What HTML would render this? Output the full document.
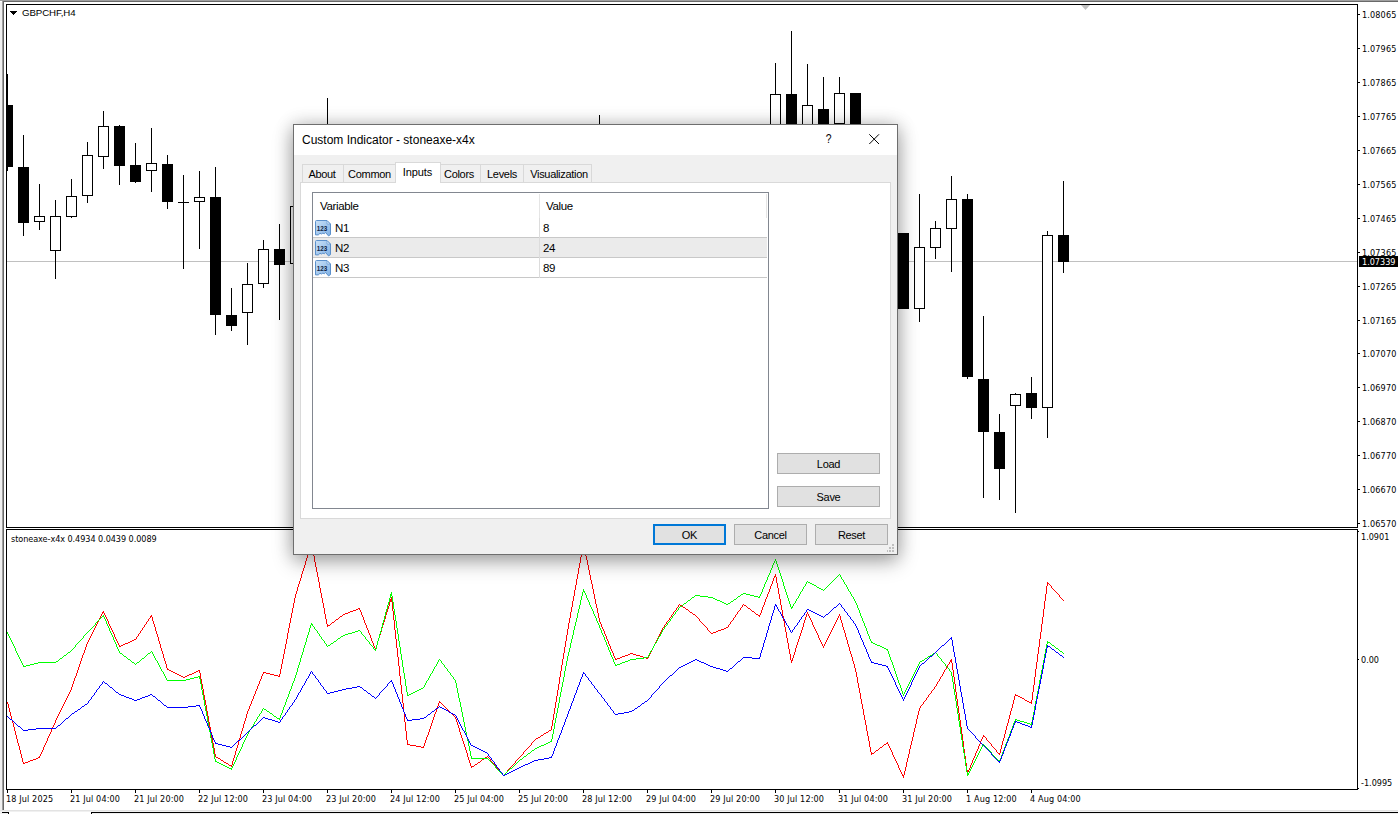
<!DOCTYPE html>
<html><head><meta charset="utf-8"><title>GBPCHF,H4</title>
<style>
html,body{margin:0;padding:0;}
body{width:1398px;height:814px;overflow:hidden;background:#fff;position:relative;font-family:"Liberation Sans",sans-serif;}
.abs{position:absolute;}
.t{position:absolute;font-family:"DejaVu Sans Condensed","Liberation Sans",sans-serif;font-size:9px;line-height:11px;color:#000;white-space:nowrap;}
#dlg{position:absolute;left:293px;top:124px;width:603px;height:429px;border:1px solid #6e6e6e;background:#f0f0f0;box-shadow:0 0 17px rgba(0,0,0,.19),0 7px 19px rgba(0,0,0,.30);}
#dlg .title{position:absolute;left:0;top:0;width:603px;height:30px;background:#fff;}
.d{position:absolute;font-size:11.5px;line-height:13px;color:#000;white-space:nowrap;letter-spacing:-0.35px;}
.tab{position:absolute;top:39px;height:18px;box-sizing:border-box;border:1px solid #d9d9d9;border-bottom:none;background:#f0f0f0;font-size:11px;line-height:19px;text-align:center;letter-spacing:-0.3px;}
.btn{position:absolute;box-sizing:border-box;width:73px;height:21px;border:1px solid #adadad;background:#e1e1e1;font-size:11px;line-height:21px;text-align:center;letter-spacing:-0.3px;}
</style></head><body>
<!-- window frame -->
<div class="abs" style="left:0;top:0;width:2px;height:812px;background:#f0f0f0"></div>
<div class="abs" style="left:2px;top:1px;width:1px;height:809px;background:#a0a0a0"></div>
<div class="abs" style="left:3px;top:1px;width:1px;height:809px;background:#696969"></div>
<div class="abs" style="left:0;top:0;width:1398px;height:1px;background:#a0a0a0"></div>
<div class="abs" style="left:3px;top:1px;width:1395px;height:1px;background:#696969"></div>
<div class="abs" style="left:0;top:1px;width:2px;height:1px;background:#fff"></div>
<div class="abs" style="left:0;top:810px;width:1398px;height:1px;background:#e3e3e3"></div>
<div class="abs" style="left:0;top:811px;width:1398px;height:3px;background:#f0f0f0"></div>
<div class="abs" style="left:2px;top:812px;width:7px;height:1px;background:#000"></div>
<div class="abs" style="left:8px;top:812px;width:1px;height:2px;background:#000"></div>
<div class="abs" style="left:9px;top:812px;width:82px;height:2px;background:#fff"></div>
<div class="abs" style="left:91px;top:812px;width:1307px;height:1px;background:#000"></div>
<div class="abs" style="left:91px;top:812px;width:1px;height:2px;background:#000"></div>
<svg class="abs" style="left:0;top:0" width="1398" height="814" viewBox="0 0 1398 814" shape-rendering="crispEdges">
<!-- chart frames -->
<rect x="6" y="4" width="1352" height="1" fill="#000"/>
<rect x="6" y="4" width="1" height="524" fill="#000"/>
<rect x="6" y="527" width="1352" height="1" fill="#000"/>
<rect x="1357" y="4" width="1" height="524" fill="#000"/>
<rect x="6" y="529" width="1352" height="1" fill="#000"/>
<rect x="6" y="529" width="1" height="261" fill="#000"/>
<rect x="1357" y="529" width="1" height="261" fill="#000"/>
<rect x="6" y="789" width="1352" height="1" fill="#000"/>
<rect x="1358" y="531" width="1" height="1" fill="#000"/>
<rect x="1358" y="659" width="1" height="1" fill="#000"/>
<rect x="1358" y="788" width="1" height="1" fill="#000"/>
<!-- bid line -->
<rect x="7" y="261" width="1350" height="1" fill="#c0c0c0"/>
<polygon points="10,11 17,11 13.5,15" fill="#000"/>
<polygon points="1081,5 1090,5 1085.5,10" fill="#c0c0c0" shape-rendering="auto"/>
<rect x="7" y="74" width="1" height="97" fill="#000"/>
<rect x="7" y="105" width="6" height="62" fill="#000"/>
<rect x="23" y="135" width="1" height="101" fill="#000"/>
<rect x="18" y="167" width="11" height="56" fill="#000"/>
<rect x="39" y="184" width="1" height="46" fill="#000"/>
<rect x="34" y="216" width="11" height="6" fill="#000"/>
<rect x="35" y="217" width="9" height="4" fill="#fff"/>
<rect x="55" y="200" width="1" height="79" fill="#000"/>
<rect x="50" y="216" width="11" height="35" fill="#000"/>
<rect x="51" y="217" width="9" height="33" fill="#fff"/>
<rect x="71" y="179" width="1" height="39" fill="#000"/>
<rect x="66" y="196" width="11" height="21" fill="#000"/>
<rect x="67" y="197" width="9" height="19" fill="#fff"/>
<rect x="87" y="142" width="1" height="61" fill="#000"/>
<rect x="82" y="155" width="11" height="41" fill="#000"/>
<rect x="83" y="156" width="9" height="39" fill="#fff"/>
<rect x="103" y="111" width="1" height="58" fill="#000"/>
<rect x="98" y="126" width="11" height="31" fill="#000"/>
<rect x="99" y="127" width="9" height="29" fill="#fff"/>
<rect x="119" y="125" width="1" height="60" fill="#000"/>
<rect x="114" y="126" width="11" height="40" fill="#000"/>
<rect x="135" y="143" width="1" height="40" fill="#000"/>
<rect x="130" y="165" width="11" height="17" fill="#000"/>
<rect x="151" y="128" width="1" height="64" fill="#000"/>
<rect x="146" y="163" width="11" height="8" fill="#000"/>
<rect x="147" y="164" width="9" height="6" fill="#fff"/>
<rect x="167" y="155" width="1" height="54" fill="#000"/>
<rect x="162" y="164" width="11" height="38" fill="#000"/>
<rect x="183" y="175" width="1" height="94" fill="#000"/>
<rect x="178" y="202" width="11" height="1" fill="#000"/>
<rect x="199" y="171" width="1" height="78" fill="#000"/>
<rect x="194" y="197" width="11" height="5" fill="#000"/>
<rect x="195" y="198" width="9" height="3" fill="#fff"/>
<rect x="215" y="167" width="1" height="168" fill="#000"/>
<rect x="210" y="197" width="11" height="118" fill="#000"/>
<rect x="231" y="288" width="1" height="43" fill="#000"/>
<rect x="226" y="315" width="11" height="11" fill="#000"/>
<rect x="247" y="263" width="1" height="82" fill="#000"/>
<rect x="242" y="284" width="11" height="29" fill="#000"/>
<rect x="243" y="285" width="9" height="27" fill="#fff"/>
<rect x="263" y="240" width="1" height="48" fill="#000"/>
<rect x="258" y="249" width="11" height="35" fill="#000"/>
<rect x="259" y="250" width="9" height="33" fill="#fff"/>
<rect x="279" y="224" width="1" height="96" fill="#000"/>
<rect x="274" y="249" width="11" height="16" fill="#000"/>
<rect x="295" y="206" width="1" height="58" fill="#000"/>
<rect x="290" y="206" width="11" height="58" fill="#000"/>
<rect x="291" y="207" width="9" height="56" fill="#fff"/>
<rect x="327" y="98" width="1" height="53" fill="#000"/>
<rect x="322" y="130" width="11" height="11" fill="#000"/>
<rect x="323" y="131" width="9" height="9" fill="#fff"/>
<rect x="599" y="115" width="1" height="36" fill="#000"/>
<rect x="594" y="130" width="11" height="11" fill="#000"/>
<rect x="595" y="131" width="9" height="9" fill="#fff"/>
<rect x="775" y="63" width="1" height="88" fill="#000"/>
<rect x="770" y="94" width="11" height="47" fill="#000"/>
<rect x="771" y="95" width="9" height="45" fill="#fff"/>
<rect x="791" y="31" width="1" height="120" fill="#000"/>
<rect x="786" y="94" width="11" height="47" fill="#000"/>
<rect x="807" y="64" width="1" height="87" fill="#000"/>
<rect x="802" y="105" width="11" height="36" fill="#000"/>
<rect x="803" y="106" width="9" height="34" fill="#fff"/>
<rect x="823" y="77" width="1" height="74" fill="#000"/>
<rect x="818" y="109" width="11" height="15" fill="#000"/>
<rect x="839" y="77" width="1" height="47" fill="#000"/>
<rect x="834" y="93" width="11" height="31" fill="#000"/>
<rect x="835" y="94" width="9" height="29" fill="#fff"/>
<rect x="855" y="93" width="1" height="58" fill="#000"/>
<rect x="850" y="93" width="11" height="48" fill="#000"/>
<rect x="903" y="233" width="1" height="76" fill="#000"/>
<rect x="898" y="233" width="11" height="76" fill="#000"/>
<rect x="919" y="194" width="1" height="128" fill="#000"/>
<rect x="914" y="247" width="11" height="62" fill="#000"/>
<rect x="915" y="248" width="9" height="60" fill="#fff"/>
<rect x="935" y="221" width="1" height="38" fill="#000"/>
<rect x="930" y="228" width="11" height="20" fill="#000"/>
<rect x="931" y="229" width="9" height="18" fill="#fff"/>
<rect x="951" y="176" width="1" height="96" fill="#000"/>
<rect x="946" y="199" width="11" height="30" fill="#000"/>
<rect x="947" y="200" width="9" height="28" fill="#fff"/>
<rect x="967" y="194" width="1" height="185" fill="#000"/>
<rect x="962" y="199" width="11" height="178" fill="#000"/>
<rect x="983" y="316" width="1" height="182" fill="#000"/>
<rect x="978" y="379" width="11" height="53" fill="#000"/>
<rect x="999" y="414" width="1" height="86" fill="#000"/>
<rect x="994" y="432" width="11" height="37" fill="#000"/>
<rect x="1015" y="393" width="1" height="120" fill="#000"/>
<rect x="1010" y="394" width="11" height="12" fill="#000"/>
<rect x="1011" y="395" width="9" height="10" fill="#fff"/>
<rect x="1031" y="377" width="1" height="42" fill="#000"/>
<rect x="1026" y="393" width="11" height="15" fill="#000"/>
<rect x="1047" y="231" width="1" height="207" fill="#000"/>
<rect x="1042" y="235" width="11" height="173" fill="#000"/>
<rect x="1043" y="236" width="9" height="171" fill="#fff"/>
<rect x="1063" y="181" width="1" height="92" fill="#000"/>
<rect x="1058" y="235" width="11" height="27" fill="#000"/>
<rect x="1358" y="14" width="2" height="1" fill="#000"/>
<rect x="1358" y="48" width="2" height="1" fill="#000"/>
<rect x="1358" y="82" width="2" height="1" fill="#000"/>
<rect x="1358" y="116" width="2" height="1" fill="#000"/>
<rect x="1358" y="150" width="2" height="1" fill="#000"/>
<rect x="1358" y="184" width="2" height="1" fill="#000"/>
<rect x="1358" y="218" width="2" height="1" fill="#000"/>
<rect x="1358" y="252" width="2" height="1" fill="#000"/>
<rect x="1358" y="286" width="2" height="1" fill="#000"/>
<rect x="1358" y="320" width="2" height="1" fill="#000"/>
<rect x="1358" y="353" width="2" height="1" fill="#000"/>
<rect x="1358" y="387" width="2" height="1" fill="#000"/>
<rect x="1358" y="421" width="2" height="1" fill="#000"/>
<rect x="1358" y="455" width="2" height="1" fill="#000"/>
<rect x="1358" y="489" width="2" height="1" fill="#000"/>
<rect x="1358" y="523" width="2" height="1" fill="#000"/>
<rect x="7" y="790" width="1" height="3" fill="#000"/>
<rect x="71" y="790" width="1" height="3" fill="#000"/>
<rect x="135" y="790" width="1" height="3" fill="#000"/>
<rect x="199" y="790" width="1" height="3" fill="#000"/>
<rect x="263" y="790" width="1" height="3" fill="#000"/>
<rect x="327" y="790" width="1" height="3" fill="#000"/>
<rect x="391" y="790" width="1" height="3" fill="#000"/>
<rect x="455" y="790" width="1" height="3" fill="#000"/>
<rect x="519" y="790" width="1" height="3" fill="#000"/>
<rect x="583" y="790" width="1" height="3" fill="#000"/>
<rect x="647" y="790" width="1" height="3" fill="#000"/>
<rect x="711" y="790" width="1" height="3" fill="#000"/>
<rect x="775" y="790" width="1" height="3" fill="#000"/>
<rect x="839" y="790" width="1" height="3" fill="#000"/>
<rect x="903" y="790" width="1" height="3" fill="#000"/>
<rect x="967" y="790" width="1" height="3" fill="#000"/>
<rect x="1031" y="790" width="1" height="3" fill="#000"/>
<g>
<path fill="#ff0000" d="M311 543h1v3h-1zM583 543h1v3h-1zM310 545h1v3h-1zM312 546h1v5h-1zM582 546h1v6h-1zM584 546h1v5h-1zM309 548h1v4h-1zM313 551h1v5h-1zM585 551h1v5h-1zM308 552h1v3h-1zM581 552h1v5h-1zM307 555h1v3h-1zM314 556h1v6h-1zM586 556h1v4h-1zM580 557h1v6h-1zM306 558h1v3h-1zM587 560h1v5h-1zM305 561h1v4h-1zM315 562h1v5h-1zM579 563h1v5h-1zM304 565h1v3h-1zM588 565h1v5h-1zM316 567h1v5h-1zM303 568h1v3h-1zM578 568h1v6h-1zM589 570h1v5h-1zM302 571h1v3h-1zM317 572h1v5h-1zM301 574h1v4h-1zM577 574h1v5h-1zM775 574h1v3h-1zM590 575h1v5h-1zM774 576h1v2h-1zM318 577h1v5h-1zM776 577h1v6h-1zM300 578h1v3h-1zM773 578h1v3h-1zM576 579h1v6h-1zM591 580h1v4h-1zM299 581h1v3h-1zM772 581h1v3h-1zM319 582h1v6h-1zM1047 582h1v4h-1zM777 583h1v5h-1zM1048 583h1v1h-1zM298 584h1v3h-1zM592 584h1v5h-1zM771 584h1v2h-1zM1049 584h1v1h-1zM575 585h1v5h-1zM1050 585h1v1h-1zM770 586h1v3h-1zM1046 586h1v8h-1zM1051 586h1v2h-1zM297 587h1v4h-1zM320 588h1v5h-1zM778 588h1v6h-1zM1052 588h1v1h-1zM593 589h1v5h-1zM769 589h1v3h-1zM1053 589h1v1h-1zM574 590h1v6h-1zM1054 590h1v1h-1zM296 591h1v3h-1zM1055 591h1v1h-1zM768 592h1v2h-1zM1056 592h1v1h-1zM321 593h1v5h-1zM1057 593h1v1h-1zM295 594h1v4h-1zM594 594h1v5h-1zM767 594h1v3h-1zM779 594h1v5h-1zM1045 594h1v7h-1zM1058 594h1v1h-1zM1059 595h1v2h-1zM573 596h1v5h-1zM391 597h1v5h-1zM766 597h1v2h-1zM1060 597h1v1h-1zM294 598h1v5h-1zM322 598h1v5h-1zM1061 598h1v1h-1zM390 599h1v3h-1zM595 599h1v5h-1zM765 599h1v3h-1zM780 599h1v6h-1zM1062 599h1v1h-1zM1063 600h1v1h-1zM572 601h1v6h-1zM1044 601h1v8h-1zM389 602h1v4h-1zM392 602h1v9h-1zM764 602h1v3h-1zM293 603h1v5h-1zM323 603h1v5h-1zM596 604h1v4h-1zM679 604h1v1h-1zM743 604h1v1h-1zM678 605h1v2h-1zM680 605h2v1h-2zM742 605h1v2h-1zM744 605h2v1h-2zM763 605h1v2h-1zM781 605h1v5h-1zM388 606h1v3h-1zM682 606h1v1h-1zM746 606h1v1h-1zM571 607h1v5h-1zM677 607h1v1h-1zM683 607h2v1h-2zM741 607h1v1h-1zM747 607h1v1h-1zM762 607h1v3h-1zM292 608h1v5h-1zM324 608h1v6h-1zM358 608h2v1h-2zM597 608h1v5h-1zM676 608h1v2h-1zM685 608h1v1h-1zM740 608h1v2h-1zM748 608h2v1h-2zM356 609h2v1h-2zM359 609h1v1h-1zM387 609h1v3h-1zM686 609h2v1h-2zM750 609h1v1h-1zM1043 609h1v8h-1zM353 610h3v1h-3zM360 610h1v2h-1zM675 610h1v1h-1zM688 610h1v1h-1zM739 610h1v1h-1zM751 610h1v1h-1zM761 610h1v3h-1zM782 610h1v6h-1zM103 611h1v2h-1zM350 611h3v1h-3zM393 611h1v9h-1zM674 611h1v1h-1zM689 611h1v1h-1zM738 611h1v1h-1zM752 611h2v1h-2zM102 612h1v2h-1zM348 612h2v1h-2zM361 612h1v3h-1zM386 612h1v3h-1zM570 612h1v6h-1zM673 612h1v2h-1zM690 612h2v1h-2zM737 612h1v2h-1zM754 612h1v1h-1zM807 612h1v2h-1zM104 613h1v2h-1zM291 613h1v5h-1zM345 613h3v1h-3zM598 613h1v5h-1zM692 613h1v1h-1zM755 613h1v1h-1zM760 613h1v2h-1zM101 614h1v2h-1zM325 614h1v5h-1zM343 614h2v1h-2zM672 614h1v1h-1zM693 614h2v1h-2zM736 614h1v1h-1zM756 614h2v1h-2zM806 614h1v3h-1zM808 614h1v2h-1zM839 614h1v2h-1zM105 615h1v2h-1zM151 615h1v2h-1zM342 615h1v1h-1zM362 615h1v2h-1zM385 615h1v4h-1zM671 615h1v2h-1zM695 615h1v1h-1zM735 615h1v2h-1zM758 615h2v1h-2zM100 616h1v2h-1zM150 616h1v2h-1zM340 616h2v1h-2zM696 616h1v1h-1zM759 616h1v1h-1zM783 616h1v5h-1zM809 616h1v2h-1zM838 616h1v2h-1zM840 616h1v4h-1zM106 617h1v2h-1zM152 617h1v4h-1zM339 617h1v1h-1zM363 617h1v3h-1zM670 617h1v1h-1zM697 617h1v1h-1zM734 617h1v1h-1zM805 617h1v3h-1zM1042 617h1v7h-1zM99 618h1v2h-1zM149 618h1v1h-1zM290 618h1v5h-1zM338 618h1v1h-1zM569 618h1v5h-1zM599 618h1v4h-1zM669 618h1v2h-1zM698 618h1v1h-1zM733 618h1v2h-1zM810 618h1v2h-1zM837 618h1v2h-1zM107 619h1v2h-1zM148 619h1v2h-1zM326 619h1v5h-1zM336 619h2v1h-2zM384 619h1v3h-1zM699 619h1v2h-1zM98 620h1v2h-1zM335 620h1v1h-1zM364 620h1v3h-1zM394 620h1v10h-1zM668 620h1v1h-1zM732 620h1v1h-1zM804 620h1v3h-1zM811 620h1v2h-1zM836 620h1v2h-1zM841 620h1v3h-1zM108 621h1v3h-1zM147 621h1v1h-1zM153 621h1v3h-1zM334 621h1v1h-1zM667 621h1v1h-1zM700 621h1v1h-1zM731 621h1v1h-1zM784 621h1v6h-1zM97 622h1v2h-1zM146 622h1v2h-1zM332 622h2v1h-2zM383 622h1v3h-1zM600 622h1v2h-1zM666 622h1v2h-1zM701 622h1v1h-1zM730 622h1v2h-1zM812 622h1v3h-1zM835 622h1v2h-1zM289 623h1v5h-1zM331 623h1v1h-1zM365 623h1v2h-1zM568 623h1v6h-1zM702 623h1v1h-1zM803 623h1v4h-1zM842 623h1v4h-1zM96 624h1v2h-1zM109 624h1v2h-1zM145 624h1v1h-1zM154 624h1v3h-1zM327 624h1v3h-1zM330 624h1v1h-1zM601 624h1v3h-1zM665 624h1v1h-1zM703 624h1v1h-1zM729 624h1v1h-1zM834 624h1v2h-1zM1041 624h1v8h-1zM144 625h1v2h-1zM328 625h2v1h-2zM366 625h1v3h-1zM382 625h1v3h-1zM664 625h1v2h-1zM704 625h1v1h-1zM728 625h1v2h-1zM813 625h1v2h-1zM95 626h1v2h-1zM110 626h1v2h-1zM705 626h1v1h-1zM833 626h1v2h-1zM143 627h1v1h-1zM155 627h1v4h-1zM602 627h1v2h-1zM663 627h1v1h-1zM706 627h1v1h-1zM726 627h2v1h-2zM785 627h1v5h-1zM802 627h1v3h-1zM814 627h1v2h-1zM843 627h1v3h-1zM94 628h1v2h-1zM111 628h1v2h-1zM142 628h1v2h-1zM288 628h1v5h-1zM367 628h1v2h-1zM381 628h1v4h-1zM662 628h1v2h-1zM707 628h1v2h-1zM724 628h2v1h-2zM832 628h1v2h-1zM567 629h1v6h-1zM603 629h1v2h-1zM721 629h3v1h-3zM815 629h1v2h-1zM93 630h1v2h-1zM112 630h1v2h-1zM141 630h1v1h-1zM368 630h1v3h-1zM395 630h1v9h-1zM661 630h1v2h-1zM708 630h1v1h-1zM718 630h3v1h-3zM801 630h1v3h-1zM831 630h1v2h-1zM844 630h1v3h-1zM140 631h1v2h-1zM156 631h1v3h-1zM604 631h1v3h-1zM709 631h1v1h-1zM716 631h2v1h-2zM816 631h1v2h-1zM92 632h1v2h-1zM113 632h1v2h-1zM380 632h1v3h-1zM660 632h1v2h-1zM710 632h1v1h-1zM713 632h3v1h-3zM786 632h1v6h-1zM830 632h1v2h-1zM1040 632h1v7h-1zM139 633h1v1h-1zM287 633h1v6h-1zM369 633h1v2h-1zM711 633h2v1h-2zM800 633h1v3h-1zM817 633h1v2h-1zM845 633h1v4h-1zM91 634h1v2h-1zM114 634h1v3h-1zM138 634h1v2h-1zM157 634h1v3h-1zM605 634h1v2h-1zM659 634h1v2h-1zM829 634h1v2h-1zM370 635h1v3h-1zM379 635h1v3h-1zM566 635h1v6h-1zM818 635h1v3h-1zM90 636h1v2h-1zM137 636h1v1h-1zM606 636h1v3h-1zM658 636h1v2h-1zM799 636h1v3h-1zM828 636h1v2h-1zM115 637h1v2h-1zM136 637h1v2h-1zM158 637h1v4h-1zM846 637h1v3h-1zM89 638h1v2h-1zM371 638h1v3h-1zM378 638h1v3h-1zM657 638h1v2h-1zM787 638h1v5h-1zM819 638h1v2h-1zM827 638h1v2h-1zM116 639h1v2h-1zM134 639h2v1h-2zM286 639h1v5h-1zM396 639h1v9h-1zM607 639h1v2h-1zM798 639h1v3h-1zM1039 639h1v8h-1zM88 640h1v2h-1zM132 640h2v1h-2zM656 640h1v2h-1zM820 640h1v2h-1zM826 640h1v2h-1zM847 640h1v4h-1zM117 641h1v2h-1zM130 641h2v1h-2zM159 641h1v3h-1zM372 641h1v2h-1zM377 641h1v4h-1zM565 641h1v6h-1zM608 641h1v3h-1zM87 642h1v2h-1zM128 642h2v1h-2zM655 642h1v2h-1zM797 642h1v3h-1zM821 642h1v2h-1zM825 642h1v2h-1zM118 643h1v2h-1zM125 643h3v1h-3zM373 643h1v3h-1zM788 643h1v6h-1zM86 644h1v3h-1zM123 644h2v1h-2zM160 644h1v4h-1zM285 644h1v5h-1zM609 644h1v2h-1zM654 644h1v2h-1zM822 644h1v2h-1zM824 644h1v2h-1zM848 644h1v3h-1zM119 645h1v2h-1zM121 645h2v1h-2zM376 645h1v3h-1zM796 645h1v3h-1zM120 646h1v1h-1zM374 646h1v2h-1zM610 646h1v3h-1zM653 646h1v2h-1zM823 646h1v2h-1zM85 647h1v3h-1zM564 647h1v6h-1zM849 647h1v4h-1zM1038 647h1v7h-1zM161 648h1v3h-1zM375 648h1v2h-1zM397 648h1v9h-1zM652 648h1v2h-1zM795 648h1v4h-1zM284 649h1v5h-1zM611 649h1v2h-1zM789 649h1v5h-1zM84 650h1v3h-1zM651 650h1v2h-1zM162 651h1v3h-1zM612 651h1v2h-1zM850 651h1v3h-1zM650 652h1v2h-1zM794 652h1v3h-1zM83 653h1v2h-1zM563 653h1v6h-1zM613 653h1v3h-1zM630 653h3v1h-3zM163 654h1v4h-1zM283 654h1v5h-1zM628 654h2v1h-2zM633 654h3v1h-3zM649 654h1v2h-1zM790 654h1v6h-1zM851 654h1v3h-1zM1037 654h1v8h-1zM82 655h1v3h-1zM625 655h3v1h-3zM636 655h4v1h-4zM793 655h1v3h-1zM614 656h1v2h-1zM622 656h3v1h-3zM640 656h3v1h-3zM648 656h1v2h-1zM398 657h1v9h-1zM620 657h2v1h-2zM643 657h3v1h-3zM852 657h1v4h-1zM81 658h1v3h-1zM164 658h1v3h-1zM615 658h1v2h-1zM617 658h3v1h-3zM646 658h2v1h-2zM792 658h1v3h-1zM282 659h1v5h-1zM562 659h1v6h-1zM616 659h1v1h-1zM951 659h1v4h-1zM791 660h1v3h-1zM950 660h1v2h-1zM80 661h1v3h-1zM165 661h1v3h-1zM853 661h1v3h-1zM949 662h1v2h-1zM1036 662h1v7h-1zM952 663h1v7h-1zM79 664h1v3h-1zM166 664h1v4h-1zM281 664h1v5h-1zM854 664h1v4h-1zM948 664h1v1h-1zM561 665h1v6h-1zM947 665h1v2h-1zM399 666h1v10h-1zM78 667h1v3h-1zM946 667h1v2h-1zM167 668h1v2h-1zM855 668h1v4h-1zM168 669h1v1h-1zM280 669h1v5h-1zM945 669h1v1h-1zM1035 669h1v8h-1zM77 670h1v3h-1zM169 670h2v1h-2zM198 670h2v1h-2zM944 670h1v2h-1zM953 670h1v7h-1zM171 671h2v1h-2zM196 671h2v1h-2zM199 671h1v2h-1zM560 671h1v6h-1zM173 672h2v1h-2zM194 672h2v1h-2zM263 672h3v1h-3zM856 672h1v5h-1zM943 672h1v2h-1zM76 673h1v3h-1zM175 673h2v1h-2zM192 673h2v1h-2zM200 673h1v6h-1zM263 673h1v1h-1zM266 673h4v1h-4zM177 674h2v1h-2zM189 674h3v1h-3zM262 674h1v2h-1zM270 674h4v1h-4zM279 674h1v3h-1zM942 674h1v2h-1zM179 675h2v1h-2zM187 675h2v1h-2zM274 675h4v1h-4zM75 676h1v2h-1zM181 676h2v1h-2zM185 676h2v1h-2zM261 676h1v3h-1zM278 676h1v1h-1zM400 676h1v9h-1zM941 676h1v1h-1zM183 677h2v1h-2zM559 677h1v7h-1zM857 677h1v6h-1zM940 677h1v2h-1zM954 677h1v7h-1zM1034 677h1v8h-1zM74 678h1v3h-1zM201 679h1v5h-1zM260 679h1v2h-1zM939 679h1v2h-1zM73 681h1v3h-1zM259 681h1v3h-1zM938 681h1v1h-1zM937 682h1v2h-1zM858 683h1v5h-1zM72 684h1v3h-1zM202 684h1v5h-1zM258 684h1v2h-1zM558 684h1v6h-1zM936 684h1v2h-1zM955 684h1v8h-1zM401 685h1v9h-1zM1033 685h1v7h-1zM257 686h1v3h-1zM935 686h1v1h-1zM71 687h1v3h-1zM934 687h1v2h-1zM859 688h1v5h-1zM203 689h1v6h-1zM256 689h1v2h-1zM933 689h1v1h-1zM70 690h1v2h-1zM557 690h1v6h-1zM932 690h1v1h-1zM255 691h1v3h-1zM931 691h1v2h-1zM69 692h1v2h-1zM956 692h1v7h-1zM1032 692h1v8h-1zM860 693h1v6h-1zM930 693h1v1h-1zM68 694h1v2h-1zM254 694h1v2h-1zM402 694h1v9h-1zM929 694h1v1h-1zM1015 694h1v2h-1zM204 695h1v5h-1zM928 695h1v2h-1zM1016 695h2v1h-2zM67 696h1v2h-1zM253 696h1v3h-1zM556 696h1v6h-1zM1014 696h1v4h-1zM1018 696h2v1h-2zM927 697h1v1h-1zM1020 697h2v1h-2zM66 698h1v2h-1zM926 698h1v2h-1zM1022 698h2v1h-2zM252 699h1v2h-1zM861 699h1v5h-1zM957 699h1v7h-1zM1024 699h1v1h-1zM65 700h1v2h-1zM205 700h1v5h-1zM925 700h1v1h-1zM1013 700h1v4h-1zM1025 700h2v1h-2zM1031 700h1v4h-1zM251 701h1v3h-1zM439 701h1v2h-1zM924 701h1v1h-1zM1027 701h2v1h-2zM7 702h1v2h-1zM64 702h1v2h-1zM440 702h1v1h-1zM555 702h1v6h-1zM923 702h1v2h-1zM1029 702h2v1h-2zM403 703h1v9h-1zM438 703h1v3h-1zM441 703h1v1h-1zM8 704h1v4h-1zM63 704h1v2h-1zM250 704h1v2h-1zM442 704h1v1h-1zM862 704h1v5h-1zM922 704h1v1h-1zM1012 704h1v4h-1zM206 705h1v6h-1zM443 705h1v1h-1zM921 705h1v1h-1zM62 706h1v2h-1zM249 706h1v3h-1zM437 706h1v3h-1zM444 706h1v1h-1zM920 706h1v2h-1zM958 706h1v7h-1zM445 707h1v1h-1zM9 708h1v4h-1zM61 708h1v2h-1zM446 708h1v1h-1zM554 708h1v6h-1zM919 708h1v3h-1zM1011 708h1v3h-1zM248 709h1v2h-1zM436 709h1v3h-1zM447 709h1v1h-1zM863 709h1v6h-1zM60 710h1v2h-1zM448 710h1v1h-1zM207 711h1v5h-1zM247 711h1v3h-1zM449 711h1v1h-1zM918 711h1v4h-1zM1010 711h1v4h-1zM10 712h1v4h-1zM59 712h1v2h-1zM404 712h1v10h-1zM435 712h1v2h-1zM450 712h1v1h-1zM451 713h1v1h-1zM959 713h1v7h-1zM58 714h1v2h-1zM246 714h1v4h-1zM434 714h1v3h-1zM452 714h1v1h-1zM553 714h1v6h-1zM453 715h1v1h-1zM864 715h1v5h-1zM917 715h1v4h-1zM1009 715h1v4h-1zM11 716h1v4h-1zM57 716h1v2h-1zM208 716h1v6h-1zM454 716h1v1h-1zM433 717h1v3h-1zM455 717h1v2h-1zM56 718h1v2h-1zM245 718h1v3h-1zM456 719h1v3h-1zM916 719h1v5h-1zM1008 719h1v4h-1zM12 720h1v3h-1zM55 720h1v3h-1zM432 720h1v3h-1zM552 720h1v6h-1zM865 720h1v5h-1zM960 720h1v7h-1zM244 721h1v3h-1zM209 722h1v5h-1zM405 722h1v9h-1zM457 722h1v3h-1zM13 723h1v4h-1zM54 723h1v2h-1zM431 723h1v3h-1zM1007 723h1v3h-1zM243 724h1v4h-1zM915 724h1v4h-1zM53 725h1v2h-1zM458 725h1v3h-1zM866 725h1v6h-1zM430 726h1v3h-1zM551 726h1v4h-1zM1006 726h1v4h-1zM14 727h1v4h-1zM52 727h1v2h-1zM210 727h1v5h-1zM961 727h1v7h-1zM242 728h1v3h-1zM459 728h1v4h-1zM914 728h1v4h-1zM51 729h1v3h-1zM429 729h1v3h-1zM549 730h2v1h-2zM1005 730h1v4h-1zM15 731h1v4h-1zM241 731h1v3h-1zM406 731h1v9h-1zM548 731h1v1h-1zM867 731h1v5h-1zM50 732h1v2h-1zM211 732h1v6h-1zM428 732h1v3h-1zM460 732h1v3h-1zM546 732h2v1h-2zM913 732h1v5h-1zM544 733h2v1h-2zM49 734h1v2h-1zM240 734h1v4h-1zM543 734h1v1h-1zM962 734h1v7h-1zM1004 734h1v4h-1zM16 735h1v4h-1zM427 735h1v2h-1zM461 735h1v3h-1zM541 735h2v1h-2zM983 735h1v2h-1zM48 736h1v2h-1zM540 736h1v1h-1zM868 736h1v5h-1zM984 736h1v1h-1zM426 737h1v3h-1zM538 737h2v1h-2zM912 737h1v4h-1zM982 737h1v2h-1zM985 737h1v1h-1zM47 738h1v3h-1zM212 738h1v5h-1zM239 738h1v3h-1zM462 738h1v3h-1zM536 738h2v1h-2zM986 738h1v2h-1zM1003 738h1v3h-1zM17 739h1v4h-1zM535 739h1v1h-1zM981 739h1v2h-1zM407 740h1v5h-1zM425 740h1v3h-1zM534 740h1v1h-1zM987 740h1v1h-1zM46 741h1v2h-1zM238 741h1v4h-1zM463 741h1v3h-1zM533 741h1v1h-1zM869 741h1v6h-1zM911 741h1v4h-1zM963 741h1v8h-1zM980 741h1v3h-1zM988 741h1v1h-1zM1002 741h1v4h-1zM532 742h1v1h-1zM887 742h1v2h-1zM989 742h1v1h-1zM18 743h1v3h-1zM45 743h1v2h-1zM213 743h1v5h-1zM424 743h1v3h-1zM531 743h1v2h-1zM886 743h1v1h-1zM990 743h1v1h-1zM408 744h2v1h-2zM464 744h1v3h-1zM884 744h2v1h-2zM888 744h1v2h-1zM979 744h1v2h-1zM991 744h1v2h-1zM44 745h1v2h-1zM237 745h1v3h-1zM410 745h6v1h-6zM530 745h1v1h-1zM883 745h1v1h-1zM910 745h1v4h-1zM1001 745h1v4h-1zM19 746h1v4h-1zM416 746h5v1h-5zM423 746h1v2h-1zM529 746h1v1h-1zM882 746h1v1h-1zM889 746h1v2h-1zM978 746h1v3h-1zM992 746h1v1h-1zM43 747h1v3h-1zM421 747h2v1h-2zM465 747h1v3h-1zM528 747h1v1h-1zM870 747h1v5h-1zM880 747h2v1h-2zM993 747h1v1h-1zM214 748h1v6h-1zM236 748h1v3h-1zM527 748h1v1h-1zM879 748h1v1h-1zM890 748h1v2h-1zM994 748h1v1h-1zM526 749h1v1h-1zM878 749h1v1h-1zM909 749h1v5h-1zM964 749h1v7h-1zM977 749h1v2h-1zM995 749h1v1h-1zM1000 749h1v4h-1zM20 750h1v4h-1zM42 750h1v2h-1zM466 750h1v3h-1zM525 750h1v1h-1zM876 750h2v1h-2zM891 750h1v2h-1zM996 750h1v2h-1zM235 751h1v4h-1zM524 751h1v1h-1zM875 751h1v1h-1zM976 751h1v2h-1zM41 752h1v2h-1zM523 752h1v2h-1zM871 752h1v3h-1zM874 752h1v1h-1zM892 752h1v3h-1zM997 752h1v1h-1zM467 753h1v4h-1zM872 753h2v1h-2zM975 753h1v3h-1zM998 753h2v1h-2zM21 754h1v4h-1zM40 754h1v2h-1zM215 754h1v3h-1zM522 754h1v1h-1zM908 754h1v4h-1zM999 754h1v1h-1zM234 755h1v3h-1zM521 755h1v1h-1zM893 755h1v2h-1zM39 756h1v2h-1zM487 756h1v1h-1zM520 756h1v1h-1zM965 756h1v7h-1zM974 756h1v2h-1zM38 757h1v1h-1zM216 757h2v1h-2zM468 757h1v3h-1zM485 757h2v1h-2zM488 757h1v1h-1zM519 757h1v1h-1zM894 757h1v2h-1zM22 758h1v4h-1zM36 758h2v1h-2zM218 758h2v1h-2zM233 758h1v3h-1zM484 758h1v1h-1zM489 758h1v1h-1zM518 758h1v1h-1zM907 758h1v4h-1zM973 758h1v2h-1zM33 759h3v1h-3zM220 759h1v1h-1zM482 759h2v1h-2zM490 759h1v2h-1zM517 759h1v1h-1zM895 759h1v2h-1zM30 760h3v1h-3zM221 760h2v1h-2zM469 760h1v3h-1zM481 760h1v1h-1zM516 760h1v1h-1zM972 760h1v3h-1zM28 761h2v1h-2zM223 761h1v1h-1zM232 761h1v4h-1zM480 761h1v1h-1zM491 761h1v1h-1zM515 761h1v2h-1zM896 761h1v2h-1zM23 762h1v2h-1zM25 762h3v1h-3zM224 762h2v1h-2zM478 762h2v1h-2zM492 762h1v1h-1zM906 762h1v5h-1zM24 763h1v1h-1zM226 763h2v1h-2zM470 763h1v3h-1zM477 763h1v1h-1zM493 763h1v1h-1zM514 763h1v1h-1zM897 763h1v2h-1zM966 763h1v7h-1zM971 763h1v2h-1zM228 764h1v1h-1zM475 764h2v1h-2zM494 764h1v1h-1zM513 764h1v1h-1zM229 765h3v1h-3zM474 765h1v1h-1zM495 765h1v2h-1zM512 765h1v1h-1zM898 765h1v3h-1zM970 765h1v3h-1zM231 766h1v1h-1zM471 766h3v1h-3zM511 766h1v1h-1zM471 767h1v1h-1zM496 767h1v1h-1zM510 767h1v1h-1zM905 767h1v4h-1zM497 768h1v1h-1zM509 768h1v1h-1zM899 768h1v2h-1zM969 768h1v2h-1zM498 769h1v1h-1zM508 769h1v1h-1zM499 770h1v1h-1zM507 770h1v2h-1zM900 770h1v2h-1zM967 770h1v4h-1zM968 770h1v2h-1zM500 771h1v2h-1zM904 771h1v4h-1zM506 772h1v1h-1zM901 772h1v2h-1zM501 773h1v1h-1zM505 773h1v1h-1zM502 774h1v1h-1zM504 774h1v1h-1zM902 774h1v2h-1zM503 775h1v1h-1zM903 775h1v3h-1z"/>
<path fill="#00ff00" d="M775 559h1v2h-1zM774 561h1v2h-1zM776 561h1v3h-1zM773 563h1v2h-1zM777 564h1v3h-1zM772 565h1v3h-1zM778 567h1v3h-1zM771 568h1v2h-1zM770 570h1v3h-1zM779 570h1v3h-1zM769 573h1v2h-1zM780 573h1v3h-1zM839 574h1v1h-1zM768 575h1v2h-1zM838 575h1v1h-1zM840 575h1v2h-1zM781 576h1v3h-1zM837 576h1v1h-1zM767 577h1v3h-1zM836 577h1v1h-1zM841 577h1v2h-1zM835 578h1v1h-1zM782 579h1v3h-1zM834 579h1v1h-1zM842 579h1v1h-1zM766 580h1v2h-1zM833 580h1v1h-1zM843 580h1v2h-1zM807 581h1v1h-1zM832 581h1v1h-1zM765 582h1v2h-1zM783 582h1v4h-1zM806 582h1v2h-1zM808 582h2v1h-2zM831 582h1v1h-1zM844 582h1v2h-1zM810 583h2v1h-2zM830 583h1v1h-1zM764 584h1v3h-1zM805 584h1v2h-1zM812 584h2v1h-2zM829 584h1v1h-1zM845 584h1v1h-1zM814 585h2v1h-2zM828 585h1v1h-1zM846 585h1v2h-1zM784 586h1v3h-1zM804 586h1v1h-1zM816 586h1v1h-1zM827 586h1v1h-1zM763 587h1v2h-1zM803 587h1v2h-1zM817 587h2v1h-2zM826 587h1v1h-1zM847 587h1v2h-1zM819 588h2v1h-2zM825 588h1v1h-1zM583 589h1v3h-1zM762 589h1v3h-1zM785 589h1v3h-1zM802 589h1v2h-1zM821 589h2v1h-2zM824 589h1v1h-1zM848 589h1v2h-1zM823 590h1v1h-1zM584 591h1v2h-1zM801 591h1v1h-1zM849 591h1v1h-1zM391 592h1v4h-1zM582 592h1v4h-1zM761 592h1v2h-1zM786 592h1v3h-1zM800 592h1v2h-1zM850 592h1v2h-1zM585 593h1v2h-1zM743 593h3v1h-3zM390 594h1v4h-1zM741 594h2v1h-2zM746 594h4v1h-4zM760 594h1v2h-1zM799 594h1v2h-1zM851 594h1v2h-1zM586 595h1v3h-1zM695 595h5v1h-5zM740 595h1v1h-1zM750 595h4v1h-4zM787 595h1v3h-1zM392 596h1v6h-1zM581 596h1v4h-1zM694 596h1v1h-1zM700 596h8v1h-8zM738 596h2v1h-2zM754 596h4v1h-4zM759 596h1v2h-1zM798 596h1v2h-1zM852 596h1v1h-1zM692 597h2v1h-2zM708 597h5v1h-5zM737 597h1v1h-1zM758 597h1v1h-1zM853 597h1v2h-1zM389 598h1v4h-1zM587 598h1v2h-1zM691 598h1v1h-1zM713 598h2v1h-2zM736 598h1v1h-1zM788 598h1v3h-1zM797 598h1v1h-1zM690 599h1v1h-1zM715 599h2v1h-2zM734 599h2v1h-2zM796 599h1v2h-1zM854 599h1v2h-1zM580 600h1v5h-1zM588 600h1v2h-1zM688 600h2v1h-2zM717 600h3v1h-3zM733 600h1v1h-1zM687 601h1v1h-1zM720 601h2v1h-2zM731 601h2v1h-2zM789 601h1v3h-1zM795 601h1v2h-1zM855 601h1v2h-1zM388 602h1v3h-1zM393 602h1v7h-1zM589 602h1v3h-1zM686 602h1v1h-1zM722 602h2v1h-2zM730 602h1v1h-1zM684 603h2v1h-2zM724 603h2v1h-2zM728 603h2v1h-2zM794 603h1v1h-1zM856 603h1v2h-1zM683 604h1v1h-1zM726 604h2v1h-2zM790 604h1v3h-1zM793 604h1v2h-1zM387 605h1v4h-1zM579 605h1v4h-1zM590 605h1v2h-1zM682 605h1v1h-1zM857 605h1v3h-1zM680 606h2v1h-2zM792 606h1v2h-1zM591 607h1v2h-1zM679 607h1v1h-1zM791 607h1v2h-1zM678 608h1v2h-1zM858 608h1v2h-1zM386 609h1v3h-1zM394 609h1v6h-1zM578 609h1v4h-1zM592 609h1v2h-1zM677 610h1v1h-1zM859 610h1v3h-1zM593 611h1v3h-1zM676 611h1v1h-1zM385 612h1v4h-1zM675 612h1v2h-1zM577 613h1v5h-1zM860 613h1v3h-1zM594 614h1v2h-1zM674 614h1v1h-1zM103 615h1v2h-1zM395 615h1v6h-1zM673 615h1v1h-1zM102 616h1v1h-1zM384 616h1v4h-1zM595 616h1v2h-1zM672 616h1v2h-1zM861 616h1v2h-1zM101 617h1v1h-1zM104 617h1v2h-1zM100 618h1v1h-1zM576 618h1v4h-1zM596 618h1v3h-1zM671 618h1v1h-1zM862 618h1v3h-1zM99 619h1v1h-1zM105 619h1v2h-1zM670 619h1v2h-1zM98 620h1v1h-1zM383 620h1v3h-1zM97 621h1v1h-1zM106 621h1v3h-1zM396 621h1v7h-1zM597 621h1v2h-1zM669 621h1v1h-1zM863 621h1v2h-1zM96 622h1v1h-1zM575 622h1v4h-1zM668 622h1v1h-1zM95 623h1v2h-1zM311 623h1v2h-1zM382 623h1v4h-1zM598 623h1v2h-1zM667 623h1v2h-1zM864 623h1v3h-1zM107 624h1v2h-1zM312 624h1v2h-1zM94 625h1v1h-1zM310 625h1v3h-1zM599 625h1v3h-1zM666 625h1v1h-1zM93 626h1v1h-1zM108 626h1v2h-1zM313 626h1v1h-1zM574 626h1v4h-1zM665 626h1v1h-1zM865 626h1v2h-1zM92 627h1v1h-1zM314 627h1v2h-1zM381 627h1v4h-1zM664 627h1v2h-1zM91 628h1v1h-1zM109 628h1v3h-1zM309 628h1v4h-1zM397 628h1v6h-1zM600 628h1v2h-1zM866 628h1v3h-1zM90 629h1v1h-1zM315 629h1v1h-1zM663 629h1v1h-1zM89 630h1v1h-1zM316 630h1v1h-1zM358 630h2v1h-2zM573 630h1v5h-1zM601 630h1v3h-1zM662 630h1v2h-1zM88 631h1v1h-1zM110 631h1v2h-1zM317 631h1v2h-1zM355 631h3v1h-3zM360 631h1v1h-1zM380 631h1v3h-1zM867 631h1v3h-1zM7 632h1v2h-1zM87 632h1v1h-1zM308 632h1v3h-1zM352 632h3v1h-3zM361 632h1v2h-1zM661 632h1v2h-1zM86 633h1v1h-1zM111 633h1v2h-1zM318 633h1v1h-1zM348 633h4v1h-4zM602 633h1v2h-1zM8 634h1v2h-1zM85 634h1v1h-1zM319 634h1v2h-1zM345 634h3v1h-3zM362 634h1v1h-1zM379 634h1v4h-1zM398 634h1v7h-1zM660 634h1v2h-1zM868 634h1v2h-1zM84 635h1v1h-1zM112 635h1v2h-1zM307 635h1v3h-1zM343 635h2v1h-2zM363 635h1v1h-1zM572 635h1v4h-1zM603 635h1v2h-1zM9 636h1v2h-1zM83 636h1v2h-1zM320 636h1v1h-1zM341 636h2v1h-2zM364 636h1v1h-1zM659 636h1v1h-1zM869 636h1v3h-1zM113 637h1v3h-1zM321 637h1v2h-1zM340 637h1v1h-1zM365 637h1v2h-1zM604 637h1v3h-1zM658 637h1v2h-1zM10 638h1v2h-1zM82 638h1v1h-1zM306 638h1v4h-1zM338 638h2v1h-2zM378 638h1v3h-1zM81 639h1v1h-1zM322 639h1v1h-1zM337 639h1v1h-1zM366 639h1v1h-1zM571 639h1v4h-1zM657 639h1v2h-1zM870 639h1v2h-1zM11 640h1v2h-1zM80 640h1v1h-1zM114 640h1v2h-1zM323 640h1v1h-1zM336 640h1v1h-1zM367 640h1v1h-1zM605 640h1v2h-1zM79 641h1v1h-1zM324 641h1v2h-1zM334 641h2v1h-2zM368 641h1v1h-1zM377 641h1v4h-1zM399 641h1v6h-1zM656 641h1v2h-1zM871 641h1v2h-1zM1047 641h1v3h-1zM12 642h1v2h-1zM78 642h1v1h-1zM115 642h1v2h-1zM305 642h1v3h-1zM333 642h1v1h-1zM369 642h1v2h-1zM606 642h1v3h-1zM872 642h1v1h-1zM1048 642h2v1h-2zM77 643h1v1h-1zM325 643h1v1h-1zM331 643h2v1h-2zM570 643h1v5h-1zM655 643h1v1h-1zM873 643h2v1h-2zM1050 643h1v1h-1zM13 644h1v2h-1zM76 644h1v1h-1zM116 644h1v3h-1zM326 644h1v2h-1zM330 644h1v1h-1zM370 644h1v1h-1zM654 644h1v2h-1zM875 644h2v1h-2zM1046 644h1v5h-1zM1051 644h1v1h-1zM75 645h1v2h-1zM304 645h1v3h-1zM328 645h2v1h-2zM371 645h1v1h-1zM376 645h1v4h-1zM607 645h1v2h-1zM877 645h3v1h-3zM1052 645h2v1h-2zM14 646h1v2h-1zM327 646h1v1h-1zM372 646h1v1h-1zM653 646h1v2h-1zM880 646h2v1h-2zM1054 646h1v1h-1zM74 647h1v1h-1zM117 647h1v2h-1zM373 647h1v2h-1zM400 647h1v7h-1zM608 647h1v3h-1zM882 647h2v1h-2zM1055 647h1v1h-1zM15 648h1v3h-1zM73 648h1v1h-1zM303 648h1v4h-1zM569 648h1v4h-1zM652 648h1v2h-1zM884 648h2v1h-2zM1056 648h2v1h-2zM72 649h1v1h-1zM118 649h1v2h-1zM374 649h2v1h-2zM886 649h2v1h-2zM1045 649h1v5h-1zM1058 649h1v1h-1zM71 650h1v1h-1zM375 650h1v1h-1zM609 650h1v2h-1zM651 650h1v1h-1zM887 650h1v1h-1zM1059 650h1v1h-1zM16 651h1v2h-1zM70 651h1v1h-1zM119 651h1v2h-1zM151 651h1v1h-1zM650 651h1v2h-1zM888 651h1v3h-1zM1060 651h2v1h-2zM68 652h2v1h-2zM150 652h1v1h-1zM152 652h1v2h-1zM302 652h1v3h-1zM568 652h1v4h-1zM610 652h1v3h-1zM935 652h1v1h-1zM1062 652h1v1h-1zM17 653h1v2h-1zM67 653h1v1h-1zM120 653h2v1h-2zM148 653h2v1h-2zM649 653h1v2h-1zM933 653h2v1h-2zM936 653h1v1h-1zM1063 653h1v1h-1zM66 654h1v1h-1zM122 654h1v1h-1zM147 654h1v1h-1zM153 654h1v2h-1zM401 654h1v6h-1zM889 654h1v3h-1zM932 654h1v1h-1zM937 654h1v2h-1zM1044 654h1v6h-1zM18 655h1v2h-1zM64 655h2v1h-2zM123 655h1v1h-1zM146 655h1v1h-1zM301 655h1v3h-1zM611 655h1v2h-1zM648 655h1v2h-1zM930 655h2v1h-2zM63 656h1v1h-1zM124 656h2v1h-2zM145 656h1v1h-1zM154 656h1v2h-1zM567 656h1v5h-1zM928 656h2v1h-2zM938 656h1v1h-1zM19 657h1v2h-1zM62 657h1v1h-1zM126 657h1v1h-1zM144 657h1v1h-1zM612 657h1v2h-1zM644 657h4v1h-4zM890 657h1v3h-1zM927 657h1v1h-1zM939 657h1v1h-1zM60 658h2v1h-2zM127 658h1v1h-1zM142 658h2v1h-2zM155 658h1v2h-1zM300 658h1v4h-1zM636 658h8v1h-8zM925 658h2v1h-2zM940 658h1v1h-1zM20 659h1v2h-1zM59 659h1v1h-1zM128 659h2v1h-2zM141 659h1v1h-1zM439 659h1v1h-1zM613 659h1v3h-1zM630 659h6v1h-6zM924 659h1v1h-1zM941 659h1v2h-1zM58 660h1v1h-1zM130 660h1v1h-1zM140 660h1v1h-1zM156 660h1v1h-1zM402 660h1v7h-1zM438 660h1v2h-1zM440 660h1v1h-1zM628 660h2v1h-2zM891 660h1v2h-1zM922 660h2v1h-2zM1043 660h1v5h-1zM21 661h1v2h-1zM56 661h2v1h-2zM131 661h1v1h-1zM139 661h1v1h-1zM157 661h1v2h-1zM441 661h1v2h-1zM566 661h1v5h-1zM625 661h3v1h-3zM920 661h2v1h-2zM942 661h1v1h-1zM38 662h18v1h-18zM132 662h2v1h-2zM137 662h2v1h-2zM299 662h1v3h-1zM437 662h1v2h-1zM614 662h1v2h-1zM622 662h3v1h-3zM892 662h1v3h-1zM919 662h1v2h-1zM943 662h1v1h-1zM22 663h1v2h-1zM34 663h4v1h-4zM134 663h1v1h-1zM136 663h1v1h-1zM158 663h1v2h-1zM442 663h1v1h-1zM620 663h2v1h-2zM944 663h1v1h-1zM30 664h4v1h-4zM135 664h1v1h-1zM436 664h1v2h-1zM443 664h1v1h-1zM615 664h1v2h-1zM617 664h3v1h-3zM918 664h1v2h-1zM945 664h1v2h-1zM23 665h1v2h-1zM26 665h4v1h-4zM159 665h1v2h-1zM298 665h1v3h-1zM444 665h1v2h-1zM616 665h1v1h-1zM893 665h1v3h-1zM1042 665h1v5h-1zM24 666h2v1h-2zM435 666h1v1h-1zM565 666h1v5h-1zM917 666h1v2h-1zM946 666h1v1h-1zM160 667h1v2h-1zM403 667h1v6h-1zM434 667h1v2h-1zM445 667h1v1h-1zM947 667h1v1h-1zM297 668h1v4h-1zM446 668h1v1h-1zM894 668h1v3h-1zM916 668h1v2h-1zM948 668h1v1h-1zM161 669h1v2h-1zM433 669h1v2h-1zM447 669h1v2h-1zM949 669h1v2h-1zM915 670h1v2h-1zM1041 670h1v5h-1zM162 671h1v1h-1zM432 671h1v2h-1zM448 671h1v1h-1zM564 671h1v6h-1zM895 671h1v3h-1zM950 671h1v1h-1zM163 672h1v2h-1zM296 672h1v3h-1zM449 672h1v1h-1zM914 672h1v2h-1zM951 672h1v4h-1zM404 673h1v6h-1zM431 673h1v1h-1zM450 673h1v2h-1zM164 674h1v2h-1zM430 674h1v2h-1zM896 674h1v3h-1zM913 674h1v2h-1zM295 675h1v3h-1zM451 675h1v1h-1zM1040 675h1v5h-1zM165 676h1v2h-1zM198 676h2v1h-2zM429 676h1v2h-1zM452 676h1v1h-1zM912 676h1v2h-1zM952 676h1v6h-1zM194 677h4v1h-4zM199 677h1v2h-1zM453 677h1v2h-1zM563 677h1v5h-1zM897 677h1v3h-1zM166 678h1v2h-1zM190 678h4v1h-4zM294 678h1v3h-1zM428 678h1v2h-1zM911 678h1v2h-1zM186 679h4v1h-4zM200 679h1v5h-1zM405 679h1v7h-1zM454 679h1v1h-1zM167 680h19v1h-19zM427 680h1v1h-1zM455 680h1v3h-1zM898 680h1v3h-1zM910 680h1v2h-1zM1039 680h1v6h-1zM293 681h1v2h-1zM426 681h1v2h-1zM562 682h1v5h-1zM909 682h1v2h-1zM953 682h1v7h-1zM292 683h1v3h-1zM425 683h1v2h-1zM456 683h1v5h-1zM899 683h1v2h-1zM201 684h1v6h-1zM908 684h1v2h-1zM424 685h1v2h-1zM900 685h1v3h-1zM291 686h1v3h-1zM406 686h1v6h-1zM907 686h1v2h-1zM1038 686h1v5h-1zM423 687h1v1h-1zM561 687h1v5h-1zM421 688h2v1h-2zM457 688h1v5h-1zM901 688h1v3h-1zM906 688h1v2h-1zM290 689h1v2h-1zM419 689h2v1h-2zM954 689h1v6h-1zM202 690h1v5h-1zM417 690h2v1h-2zM905 690h1v2h-1zM289 691h1v3h-1zM415 691h2v1h-2zM902 691h1v3h-1zM1037 691h1v5h-1zM407 692h1v4h-1zM413 692h2v1h-2zM560 692h1v5h-1zM904 692h1v2h-1zM411 693h2v1h-2zM458 693h1v5h-1zM288 694h1v3h-1zM409 694h2v1h-2zM903 694h1v2h-1zM203 695h1v5h-1zM408 695h1v1h-1zM955 695h1v6h-1zM1036 696h1v5h-1zM287 697h1v2h-1zM559 697h1v6h-1zM459 698h1v4h-1zM286 699h1v3h-1zM204 700h1v6h-1zM956 701h1v7h-1zM1035 701h1v5h-1zM285 702h1v3h-1zM460 702h1v5h-1zM558 703h1v5h-1zM284 705h1v2h-1zM205 706h1v5h-1zM1034 706h1v6h-1zM283 707h1v3h-1zM461 707h1v5h-1zM263 708h1v1h-1zM557 708h1v5h-1zM957 708h1v6h-1zM262 709h1v2h-1zM264 709h2v1h-2zM266 710h1v1h-1zM282 710h1v3h-1zM206 711h1v5h-1zM261 711h1v2h-1zM267 711h2v1h-2zM269 712h1v1h-1zM462 712h1v5h-1zM1033 712h1v5h-1zM260 713h1v1h-1zM270 713h2v1h-2zM281 713h1v2h-1zM556 713h1v5h-1zM259 714h1v2h-1zM272 714h1v1h-1zM958 714h1v7h-1zM273 715h1v1h-1zM280 715h1v3h-1zM207 716h1v6h-1zM258 716h1v1h-1zM274 716h2v1h-2zM257 717h1v2h-1zM276 717h1v1h-1zM463 717h1v5h-1zM1032 717h1v5h-1zM277 718h3v1h-3zM555 718h1v5h-1zM256 719h1v2h-1zM279 719h1v1h-1zM1015 719h2v1h-2zM1015 720h1v1h-1zM1017 720h3v1h-3zM255 721h1v1h-1zM959 721h1v6h-1zM1014 721h1v2h-1zM1020 721h4v1h-4zM208 722h1v5h-1zM254 722h1v2h-1zM464 722h1v5h-1zM1024 722h3v1h-3zM1031 722h1v3h-1zM554 723h1v6h-1zM1013 723h1v3h-1zM1027 723h3v1h-3zM253 724h1v2h-1zM1030 724h1v1h-1zM252 726h1v1h-1zM1012 726h1v3h-1zM209 727h1v5h-1zM251 727h1v2h-1zM465 727h1v5h-1zM960 727h1v7h-1zM250 729h1v1h-1zM553 729h1v5h-1zM1011 729h1v2h-1zM249 730h1v2h-1zM1010 731h1v3h-1zM210 732h1v6h-1zM248 732h1v2h-1zM466 732h1v5h-1zM247 734h1v2h-1zM552 734h1v5h-1zM961 734h1v6h-1zM1009 734h1v3h-1zM246 736h1v2h-1zM467 737h1v4h-1zM1008 737h1v2h-1zM211 738h1v5h-1zM245 738h1v2h-1zM551 739h1v3h-1zM1007 739h1v3h-1zM244 740h1v2h-1zM962 740h1v7h-1zM468 741h1v5h-1zM550 741h1v1h-1zM243 742h1v2h-1zM548 742h2v1h-2zM1006 742h1v2h-1zM212 743h1v5h-1zM546 743h2v1h-2zM242 744h1v3h-1zM544 744h2v1h-2zM983 744h1v1h-1zM1005 744h1v3h-1zM541 745h3v1h-3zM982 745h1v2h-1zM984 745h1v1h-1zM469 746h1v5h-1zM539 746h2v1h-2zM985 746h1v1h-1zM241 747h1v2h-1zM537 747h2v1h-2zM963 747h1v6h-1zM981 747h1v2h-1zM986 747h1v1h-1zM1004 747h1v3h-1zM213 748h1v6h-1zM535 748h2v1h-2zM987 748h1v1h-1zM240 749h1v2h-1zM534 749h1v1h-1zM980 749h1v2h-1zM988 749h1v1h-1zM532 750h2v1h-2zM989 750h1v1h-1zM1003 750h1v2h-1zM239 751h1v2h-1zM470 751h1v5h-1zM531 751h1v1h-1zM979 751h1v2h-1zM990 751h1v1h-1zM530 752h1v1h-1zM991 752h1v2h-1zM1002 752h1v3h-1zM238 753h1v2h-1zM528 753h2v1h-2zM964 753h1v6h-1zM978 753h1v2h-1zM214 754h1v5h-1zM527 754h1v1h-1zM992 754h1v1h-1zM237 755h1v2h-1zM526 755h1v1h-1zM977 755h1v2h-1zM993 755h1v1h-1zM1001 755h1v3h-1zM471 756h1v3h-1zM524 756h2v1h-2zM994 756h1v1h-1zM236 757h1v3h-1zM523 757h1v1h-1zM976 757h1v2h-1zM995 757h1v1h-1zM472 758h16v1h-16zM522 758h1v1h-1zM996 758h1v1h-1zM1000 758h1v2h-1zM215 759h1v3h-1zM488 759h1v1h-1zM520 759h2v1h-2zM965 759h1v7h-1zM975 759h1v2h-1zM997 759h1v1h-1zM235 760h1v2h-1zM489 760h1v1h-1zM519 760h1v1h-1zM998 760h2v1h-2zM216 761h1v1h-1zM490 761h1v1h-1zM518 761h1v1h-1zM974 761h1v2h-1zM999 761h1v1h-1zM217 762h2v1h-2zM234 762h1v2h-1zM491 762h1v1h-1zM517 762h1v1h-1zM219 763h2v1h-2zM492 763h1v1h-1zM516 763h1v1h-1zM973 763h1v2h-1zM221 764h2v1h-2zM233 764h1v2h-1zM493 764h1v1h-1zM515 764h1v1h-1zM223 765h2v1h-2zM494 765h1v1h-1zM514 765h1v1h-1zM972 765h1v2h-1zM225 766h2v1h-2zM232 766h1v2h-1zM495 766h1v2h-1zM513 766h1v1h-1zM966 766h1v6h-1zM227 767h2v1h-2zM512 767h1v1h-1zM971 767h1v2h-1zM229 768h3v1h-3zM496 768h1v1h-1zM510 768h2v1h-2zM231 769h1v1h-1zM497 769h1v1h-1zM509 769h1v1h-1zM970 769h1v2h-1zM498 770h1v1h-1zM508 770h1v1h-1zM499 771h1v1h-1zM507 771h1v1h-1zM969 771h1v2h-1zM500 772h1v1h-1zM506 772h1v1h-1zM967 772h1v4h-1zM501 773h1v1h-1zM505 773h1v1h-1zM968 773h1v2h-1zM502 774h1v1h-1zM504 774h1v1h-1zM503 775h1v1h-1z"/>
<path fill="#0000ff" d="M839 603h1v1h-1zM775 604h1v2h-1zM838 604h1v1h-1zM840 604h1v1h-1zM776 605h1v2h-1zM837 605h1v1h-1zM841 605h1v2h-1zM774 606h1v4h-1zM836 606h1v1h-1zM777 607h1v2h-1zM834 607h2v1h-2zM842 607h1v1h-1zM833 608h1v1h-1zM843 608h1v1h-1zM778 609h1v2h-1zM807 609h2v1h-2zM832 609h1v1h-1zM844 609h1v2h-1zM773 610h1v3h-1zM806 610h1v2h-1zM809 610h2v1h-2zM831 610h1v1h-1zM779 611h1v1h-1zM811 611h2v1h-2zM830 611h1v1h-1zM845 611h1v1h-1zM780 612h1v2h-1zM805 612h1v1h-1zM813 612h2v1h-2zM829 612h1v1h-1zM846 612h1v1h-1zM772 613h1v3h-1zM804 613h1v2h-1zM815 613h2v1h-2zM828 613h1v1h-1zM847 613h1v2h-1zM781 614h1v2h-1zM817 614h2v1h-2zM826 614h2v1h-2zM803 615h1v1h-1zM819 615h2v1h-2zM825 615h1v1h-1zM848 615h1v1h-1zM771 616h1v4h-1zM782 616h1v2h-1zM802 616h1v1h-1zM821 616h2v1h-2zM824 616h1v1h-1zM849 616h1v1h-1zM801 617h1v2h-1zM823 617h1v1h-1zM850 617h1v2h-1zM783 618h1v1h-1zM784 619h1v2h-1zM800 619h1v1h-1zM851 619h1v1h-1zM770 620h1v3h-1zM799 620h1v2h-1zM852 620h1v1h-1zM785 621h1v2h-1zM853 621h1v2h-1zM798 622h1v1h-1zM769 623h1v3h-1zM786 623h1v2h-1zM797 623h1v2h-1zM854 623h1v1h-1zM855 624h1v2h-1zM787 625h1v1h-1zM796 625h1v1h-1zM768 626h1v4h-1zM788 626h1v2h-1zM795 626h1v1h-1zM856 626h1v2h-1zM794 627h1v2h-1zM789 628h1v2h-1zM857 628h1v2h-1zM793 629h1v1h-1zM767 630h1v3h-1zM790 630h1v2h-1zM792 630h1v2h-1zM858 630h1v3h-1zM791 632h1v1h-1zM766 633h1v4h-1zM859 633h1v2h-1zM860 635h1v3h-1zM765 637h1v3h-1zM951 637h1v3h-1zM861 638h1v2h-1zM950 638h1v1h-1zM949 639h1v1h-1zM764 640h1v3h-1zM862 640h1v2h-1zM948 640h1v1h-1zM952 640h1v6h-1zM947 641h1v1h-1zM863 642h1v3h-1zM946 642h1v1h-1zM763 643h1v4h-1zM945 643h1v1h-1zM944 644h1v1h-1zM864 645h1v2h-1zM942 645h2v1h-2zM1047 645h1v3h-1zM941 646h1v1h-1zM953 646h1v6h-1zM1048 646h2v1h-2zM762 647h1v3h-1zM865 647h1v2h-1zM940 647h1v1h-1zM1050 647h1v1h-1zM939 648h1v1h-1zM1046 648h1v5h-1zM1051 648h1v1h-1zM866 649h1v3h-1zM938 649h1v1h-1zM1052 649h2v1h-2zM761 650h1v3h-1zM937 650h1v1h-1zM1054 650h1v1h-1zM936 651h1v1h-1zM1055 651h1v1h-1zM867 652h1v2h-1zM935 652h1v1h-1zM954 652h1v5h-1zM1056 652h2v1h-2zM760 653h1v4h-1zM934 653h1v1h-1zM1045 653h1v5h-1zM1058 653h1v1h-1zM868 654h1v3h-1zM933 654h1v1h-1zM1059 654h1v1h-1zM932 655h1v1h-1zM1060 655h2v1h-2zM930 656h2v1h-2zM1062 656h1v1h-1zM743 657h9v1h-9zM759 657h1v2h-1zM869 657h1v2h-1zM929 657h1v1h-1zM955 657h1v6h-1zM1063 657h1v1h-1zM742 658h1v1h-1zM752 658h7v1h-7zM928 658h1v1h-1zM1044 658h1v5h-1zM695 659h2v1h-2zM741 659h1v1h-1zM870 659h1v2h-1zM927 659h1v1h-1zM693 660h2v1h-2zM697 660h2v1h-2zM740 660h1v1h-1zM926 660h1v1h-1zM691 661h2v1h-2zM699 661h2v1h-2zM738 661h2v1h-2zM871 661h1v2h-1zM925 661h1v1h-1zM689 662h2v1h-2zM701 662h3v1h-3zM737 662h1v1h-1zM872 662h2v1h-2zM924 662h1v1h-1zM687 663h2v1h-2zM704 663h2v1h-2zM736 663h1v1h-1zM874 663h4v1h-4zM922 663h2v1h-2zM956 663h1v6h-1zM1043 663h1v6h-1zM685 664h2v1h-2zM706 664h2v1h-2zM735 664h1v1h-1zM878 664h4v1h-4zM921 664h1v1h-1zM683 665h2v1h-2zM708 665h2v1h-2zM734 665h1v1h-1zM882 665h4v1h-4zM920 665h1v1h-1zM681 666h2v1h-2zM710 666h3v1h-3zM733 666h1v1h-1zM886 666h2v1h-2zM919 666h1v2h-1zM679 667h2v1h-2zM713 667h3v1h-3zM732 667h1v1h-1zM887 667h1v1h-1zM678 668h1v1h-1zM716 668h4v1h-4zM730 668h2v1h-2zM888 668h1v2h-1zM918 668h1v2h-1zM677 669h1v1h-1zM720 669h3v1h-3zM729 669h1v1h-1zM957 669h1v5h-1zM1042 669h1v5h-1zM676 670h1v1h-1zM723 670h3v1h-3zM728 670h1v1h-1zM889 670h1v2h-1zM917 670h1v2h-1zM311 671h1v1h-1zM675 671h1v1h-1zM726 671h2v1h-2zM310 672h1v2h-1zM312 672h1v2h-1zM583 672h1v2h-1zM674 672h1v1h-1zM890 672h1v2h-1zM916 672h1v2h-1zM584 673h1v1h-1zM673 673h1v1h-1zM309 674h1v2h-1zM313 674h1v1h-1zM582 674h1v3h-1zM585 674h1v2h-1zM672 674h1v1h-1zM891 674h1v2h-1zM915 674h1v2h-1zM958 674h1v6h-1zM1041 674h1v5h-1zM314 675h1v1h-1zM670 675h2v1h-2zM308 676h1v2h-1zM315 676h1v2h-1zM586 676h1v1h-1zM669 676h1v1h-1zM892 676h1v2h-1zM914 676h1v2h-1zM581 677h1v2h-1zM587 677h1v1h-1zM668 677h1v1h-1zM307 678h1v1h-1zM316 678h1v1h-1zM588 678h1v2h-1zM667 678h1v1h-1zM893 678h1v2h-1zM913 678h1v2h-1zM306 679h1v2h-1zM317 679h1v1h-1zM580 679h1v3h-1zM666 679h1v1h-1zM1040 679h1v5h-1zM318 680h1v2h-1zM391 680h1v2h-1zM589 680h1v1h-1zM665 680h1v1h-1zM894 680h1v2h-1zM912 680h1v2h-1zM959 680h1v6h-1zM103 681h1v1h-1zM305 681h1v2h-1zM390 681h1v1h-1zM590 681h1v1h-1zM664 681h1v1h-1zM102 682h1v2h-1zM104 682h1v1h-1zM319 682h1v1h-1zM389 682h1v1h-1zM392 682h1v2h-1zM579 682h1v3h-1zM591 682h1v2h-1zM663 682h1v1h-1zM895 682h1v3h-1zM911 682h1v3h-1zM105 683h2v1h-2zM304 683h1v2h-1zM320 683h1v2h-1zM388 683h1v1h-1zM662 683h1v1h-1zM101 684h1v1h-1zM107 684h1v1h-1zM387 684h1v2h-1zM393 684h1v3h-1zM592 684h1v1h-1zM661 684h1v1h-1zM1039 684h1v5h-1zM100 685h1v1h-1zM108 685h1v1h-1zM303 685h1v1h-1zM321 685h1v1h-1zM578 685h1v2h-1zM593 685h1v1h-1zM660 685h1v1h-1zM896 685h1v2h-1zM910 685h1v2h-1zM99 686h1v2h-1zM109 686h1v1h-1zM302 686h1v2h-1zM322 686h1v1h-1zM357 686h3v1h-3zM386 686h1v1h-1zM594 686h1v2h-1zM659 686h1v2h-1zM960 686h1v6h-1zM110 687h2v1h-2zM323 687h1v2h-1zM352 687h5v1h-5zM360 687h2v1h-2zM385 687h1v1h-1zM394 687h1v2h-1zM577 687h1v3h-1zM897 687h1v2h-1zM909 687h1v2h-1zM98 688h1v1h-1zM112 688h1v1h-1zM301 688h1v2h-1zM346 688h6v1h-6zM362 688h1v1h-1zM384 688h1v1h-1zM595 688h1v1h-1zM658 688h1v1h-1zM97 689h1v1h-1zM113 689h1v1h-1zM324 689h1v1h-1zM342 689h4v1h-4zM363 689h1v1h-1zM383 689h1v1h-1zM395 689h1v3h-1zM596 689h1v1h-1zM657 689h1v1h-1zM898 689h1v2h-1zM908 689h1v2h-1zM1038 689h1v5h-1zM96 690h1v2h-1zM114 690h1v1h-1zM300 690h1v2h-1zM325 690h1v1h-1zM338 690h4v1h-4zM364 690h2v1h-2zM382 690h1v1h-1zM576 690h1v3h-1zM597 690h1v2h-1zM656 690h1v1h-1zM115 691h1v1h-1zM326 691h1v2h-1zM334 691h4v1h-4zM366 691h1v1h-1zM381 691h1v1h-1zM655 691h1v1h-1zM899 691h1v2h-1zM907 691h1v2h-1zM95 692h1v1h-1zM116 692h2v1h-2zM299 692h1v1h-1zM330 692h4v1h-4zM367 692h1v1h-1zM380 692h1v1h-1zM396 692h1v2h-1zM598 692h1v1h-1zM654 692h1v1h-1zM961 692h1v5h-1zM94 693h1v2h-1zM118 693h1v1h-1zM298 693h1v2h-1zM327 693h3v1h-3zM368 693h2v1h-2zM379 693h1v2h-1zM575 693h1v2h-1zM599 693h1v1h-1zM653 693h1v1h-1zM900 693h1v2h-1zM906 693h1v2h-1zM119 694h2v1h-2zM150 694h2v1h-2zM370 694h1v1h-1zM397 694h1v3h-1zM600 694h1v1h-1zM652 694h1v1h-1zM1037 694h1v5h-1zM93 695h1v1h-1zM121 695h3v1h-3zM148 695h2v1h-2zM152 695h1v1h-1zM297 695h1v2h-1zM371 695h1v1h-1zM378 695h1v1h-1zM574 695h1v3h-1zM601 695h1v2h-1zM651 695h1v2h-1zM901 695h1v2h-1zM905 695h1v2h-1zM92 696h1v1h-1zM124 696h2v1h-2zM145 696h3v1h-3zM153 696h2v1h-2zM372 696h2v1h-2zM377 696h1v1h-1zM91 697h1v2h-1zM126 697h3v1h-3zM142 697h3v1h-3zM155 697h1v1h-1zM296 697h1v2h-1zM374 697h1v1h-1zM376 697h1v1h-1zM398 697h1v2h-1zM602 697h1v1h-1zM650 697h1v1h-1zM902 697h1v2h-1zM904 697h1v2h-1zM962 697h1v6h-1zM129 698h3v1h-3zM140 698h2v1h-2zM156 698h1v1h-1zM375 698h1v1h-1zM573 698h1v3h-1zM603 698h1v1h-1zM649 698h1v1h-1zM90 699h1v1h-1zM132 699h2v1h-2zM137 699h3v1h-3zM157 699h1v1h-1zM295 699h1v1h-1zM399 699h1v3h-1zM604 699h1v2h-1zM648 699h1v1h-1zM903 699h1v2h-1zM1036 699h1v5h-1zM89 700h1v1h-1zM134 700h3v1h-3zM158 700h2v1h-2zM294 700h1v2h-1zM647 700h1v1h-1zM88 701h1v2h-1zM160 701h1v1h-1zM572 701h1v2h-1zM605 701h1v1h-1zM645 701h2v1h-2zM161 702h1v1h-1zM293 702h1v1h-1zM400 702h1v2h-1zM606 702h1v1h-1zM644 702h1v1h-1zM87 703h1v1h-1zM162 703h1v1h-1zM292 703h1v2h-1zM571 703h1v3h-1zM607 703h1v2h-1zM642 703h2v1h-2zM963 703h1v6h-1zM85 704h2v1h-2zM163 704h1v1h-1zM401 704h1v3h-1zM641 704h1v1h-1zM1035 704h1v6h-1zM84 705h1v1h-1zM164 705h2v1h-2zM196 705h4v1h-4zM291 705h1v1h-1zM608 705h1v1h-1zM640 705h1v1h-1zM82 706h2v1h-2zM166 706h1v1h-1zM188 706h8v1h-8zM199 706h1v1h-1zM290 706h1v1h-1zM439 706h1v1h-1zM570 706h1v3h-1zM609 706h1v1h-1zM638 706h2v1h-2zM81 707h1v1h-1zM167 707h21v1h-21zM200 707h1v2h-1zM289 707h1v2h-1zM402 707h1v2h-1zM438 707h1v1h-1zM440 707h2v1h-2zM610 707h1v2h-1zM637 707h1v1h-1zM80 708h1v1h-1zM436 708h2v1h-2zM442 708h2v1h-2zM635 708h2v1h-2zM78 709h2v1h-2zM201 709h1v2h-1zM288 709h1v1h-1zM403 709h1v3h-1zM435 709h1v1h-1zM444 709h2v1h-2zM569 709h1v2h-1zM611 709h1v1h-1zM634 709h1v1h-1zM964 709h1v5h-1zM77 710h1v1h-1zM287 710h1v2h-1zM434 710h1v1h-1zM446 710h2v1h-2zM612 710h1v1h-1zM632 710h2v1h-2zM1034 710h1v5h-1zM75 711h2v1h-2zM202 711h1v3h-1zM432 711h2v1h-2zM448 711h1v1h-1zM568 711h1v3h-1zM613 711h1v2h-1zM629 711h3v1h-3zM74 712h1v1h-1zM286 712h1v1h-1zM404 712h1v2h-1zM431 712h1v1h-1zM449 712h2v1h-2zM624 712h5v1h-5zM72 713h2v1h-2zM285 713h1v2h-1zM430 713h1v1h-1zM451 713h2v1h-2zM614 713h1v1h-1zM618 713h6v1h-6zM71 714h1v1h-1zM203 714h1v2h-1zM405 714h1v3h-1zM428 714h2v1h-2zM453 714h2v1h-2zM567 714h1v3h-1zM615 714h3v1h-3zM965 714h1v6h-1zM70 715h1v1h-1zM284 715h1v1h-1zM427 715h1v1h-1zM455 715h1v1h-1zM1033 715h1v5h-1zM7 716h1v1h-1zM69 716h1v1h-1zM204 716h1v3h-1zM283 716h1v1h-1zM426 716h1v1h-1zM456 716h1v2h-1zM8 717h1v1h-1zM68 717h1v1h-1zM263 717h2v1h-2zM282 717h1v2h-1zM406 717h1v2h-1zM424 717h2v1h-2zM566 717h1v2h-1zM9 718h1v1h-1zM66 718h2v1h-2zM262 718h1v1h-1zM265 718h3v1h-3zM420 718h4v1h-4zM457 718h1v2h-1zM10 719h2v1h-2zM65 719h1v1h-1zM205 719h1v2h-1zM261 719h1v1h-1zM268 719h4v1h-4zM281 719h1v1h-1zM407 719h1v2h-1zM412 719h8v1h-8zM565 719h1v3h-1zM12 720h1v1h-1zM64 720h1v1h-1zM260 720h1v1h-1zM272 720h3v1h-3zM280 720h1v2h-1zM408 720h4v1h-4zM458 720h1v2h-1zM966 720h1v6h-1zM1032 720h1v5h-1zM13 721h1v1h-1zM63 721h1v1h-1zM206 721h1v2h-1zM259 721h1v1h-1zM275 721h3v1h-3zM1015 721h2v1h-2zM14 722h1v1h-1zM62 722h1v1h-1zM258 722h1v1h-1zM278 722h2v1h-2zM459 722h1v2h-1zM564 722h1v3h-1zM1015 722h1v1h-1zM1017 722h3v1h-3zM15 723h1v1h-1zM61 723h1v1h-1zM207 723h1v3h-1zM257 723h1v1h-1zM1014 723h1v2h-1zM1020 723h2v1h-2zM16 724h1v1h-1zM60 724h1v1h-1zM256 724h1v1h-1zM460 724h1v2h-1zM1022 724h3v1h-3zM17 725h1v1h-1zM58 725h2v1h-2zM254 725h2v1h-2zM563 725h1v2h-1zM1013 725h1v3h-1zM1025 725h3v1h-3zM1031 725h1v3h-1zM18 726h2v1h-2zM57 726h1v1h-1zM208 726h1v2h-1zM253 726h1v1h-1zM461 726h1v2h-1zM967 726h1v3h-1zM1028 726h2v1h-2zM20 727h1v1h-1zM56 727h1v1h-1zM252 727h1v1h-1zM562 727h1v3h-1zM1030 727h1v1h-1zM21 728h1v1h-1zM36 728h20v1h-20zM209 728h1v2h-1zM251 728h1v1h-1zM462 728h1v2h-1zM1012 728h1v2h-1zM22 729h1v1h-1zM28 729h8v1h-8zM250 729h1v1h-1zM968 729h1v1h-1zM23 730h5v1h-5zM210 730h1v3h-1zM249 730h1v1h-1zM463 730h1v1h-1zM561 730h1v3h-1zM969 730h1v1h-1zM1011 730h1v3h-1zM248 731h1v1h-1zM464 731h1v2h-1zM970 731h1v1h-1zM247 732h1v1h-1zM971 732h1v1h-1zM211 733h1v2h-1zM246 733h1v1h-1zM465 733h1v2h-1zM560 733h1v2h-1zM972 733h1v1h-1zM1010 733h1v3h-1zM245 734h1v1h-1zM973 734h1v1h-1zM212 735h1v3h-1zM244 735h1v1h-1zM466 735h1v2h-1zM559 735h1v3h-1zM974 735h1v1h-1zM243 736h1v1h-1zM975 736h1v2h-1zM1009 736h1v2h-1zM242 737h1v1h-1zM467 737h1v2h-1zM213 738h1v2h-1zM241 738h1v1h-1zM558 738h1v2h-1zM976 738h1v1h-1zM1008 738h1v3h-1zM240 739h1v1h-1zM468 739h1v2h-1zM977 739h1v1h-1zM214 740h1v2h-1zM238 740h2v1h-2zM557 740h1v3h-1zM978 740h1v1h-1zM237 741h1v1h-1zM469 741h1v2h-1zM979 741h1v1h-1zM1007 741h1v2h-1zM215 742h1v2h-1zM236 742h1v1h-1zM980 742h1v1h-1zM216 743h2v1h-2zM235 743h1v1h-1zM470 743h1v2h-1zM556 743h1v3h-1zM981 743h1v1h-1zM1006 743h1v3h-1zM218 744h4v1h-4zM234 744h1v1h-1zM982 744h1v1h-1zM222 745h4v1h-4zM233 745h1v1h-1zM471 745h2v1h-2zM983 745h1v1h-1zM226 746h4v1h-4zM232 746h1v1h-1zM473 746h2v1h-2zM555 746h1v2h-1zM984 746h1v1h-1zM1005 746h1v2h-1zM230 747h2v1h-2zM475 747h2v1h-2zM985 747h1v1h-1zM477 748h2v1h-2zM554 748h1v3h-1zM986 748h1v1h-1zM1004 748h1v3h-1zM479 749h2v1h-2zM987 749h1v1h-1zM481 750h2v1h-2zM988 750h1v1h-1zM483 751h2v1h-2zM553 751h1v3h-1zM989 751h1v1h-1zM1003 751h1v3h-1zM485 752h2v1h-2zM990 752h1v1h-1zM487 753h1v1h-1zM991 753h1v2h-1zM488 754h1v2h-1zM552 754h1v2h-1zM1002 754h1v2h-1zM992 755h1v1h-1zM489 756h1v1h-1zM551 756h1v2h-1zM993 756h1v1h-1zM1001 756h1v3h-1zM490 757h1v1h-1zM549 757h2v1h-2zM994 757h1v1h-1zM491 758h1v2h-1zM544 758h5v1h-5zM995 758h1v1h-1zM538 759h6v1h-6zM996 759h1v1h-1zM1000 759h1v2h-1zM492 760h1v1h-1zM534 760h4v1h-4zM997 760h1v1h-1zM493 761h1v1h-1zM532 761h2v1h-2zM998 761h2v1h-2zM494 762h1v2h-1zM530 762h2v1h-2zM999 762h1v1h-1zM528 763h2v1h-2zM495 764h1v1h-1zM525 764h3v1h-3zM496 765h1v2h-1zM523 765h2v1h-2zM521 766h2v1h-2zM497 767h1v1h-1zM519 767h2v1h-2zM498 768h1v1h-1zM517 768h2v1h-2zM499 769h1v2h-1zM515 769h2v1h-2zM513 770h2v1h-2zM500 771h1v1h-1zM511 771h2v1h-2zM501 772h1v1h-1zM509 772h2v1h-2zM502 773h1v2h-1zM507 773h2v1h-2zM505 774h2v1h-2zM503 775h2v1h-2z"/>
</g>
</svg>
<div class="abs" style="left:1359px;top:256px;width:39px;height:11px;background:#000"></div>
<div class="t" style="left:1362px;top:257px;color:#fff">1.07339</div>
<div class="t" style="left:22px;top:7px;font-family:'Liberation Sans',sans-serif;font-size:9.7px;letter-spacing:-0.1px">GBPCHF,H4</div>
<div class="t" style="left:11px;top:534px;letter-spacing:-0.05px">stoneaxe-x4x 0.4934 0.0439 0.0089</div>
<div class="t" style="left:1361px;top:532px">1.0901</div>
<div class="t" style="left:1361px;top:655px">0.00</div>
<div class="t" style="left:1361px;top:778px">-1.0995</div>
<div class="t" style="left:1362px;top:10px;letter-spacing:.15px">1.08065</div>
<div class="t" style="left:1362px;top:44px;letter-spacing:.15px">1.07965</div>
<div class="t" style="left:1362px;top:78px;letter-spacing:.15px">1.07865</div>
<div class="t" style="left:1362px;top:112px;letter-spacing:.15px">1.07765</div>
<div class="t" style="left:1362px;top:146px;letter-spacing:.15px">1.07665</div>
<div class="t" style="left:1362px;top:180px;letter-spacing:.15px">1.07565</div>
<div class="t" style="left:1362px;top:214px;letter-spacing:.15px">1.07465</div>
<div class="t" style="left:1362px;top:248px;letter-spacing:.15px">1.07365</div>
<div class="t" style="left:1362px;top:282px;letter-spacing:.15px">1.07265</div>
<div class="t" style="left:1362px;top:316px;letter-spacing:.15px">1.07165</div>
<div class="t" style="left:1362px;top:349px;letter-spacing:.15px">1.07070</div>
<div class="t" style="left:1362px;top:383px;letter-spacing:.15px">1.06970</div>
<div class="t" style="left:1362px;top:417px;letter-spacing:.15px">1.06870</div>
<div class="t" style="left:1362px;top:451px;letter-spacing:.15px">1.06770</div>
<div class="t" style="left:1362px;top:485px;letter-spacing:.15px">1.06670</div>
<div class="t" style="left:1362px;top:519px;letter-spacing:.15px">1.06570</div>
<div class="t" style="left:6px;top:794px;letter-spacing:.13px">18 Jul 2025</div>
<div class="t" style="left:70px;top:794px;letter-spacing:.13px">21 Jul 04:00</div>
<div class="t" style="left:134px;top:794px;letter-spacing:.13px">21 Jul 20:00</div>
<div class="t" style="left:198px;top:794px;letter-spacing:.13px">22 Jul 12:00</div>
<div class="t" style="left:262px;top:794px;letter-spacing:.13px">23 Jul 04:00</div>
<div class="t" style="left:326px;top:794px;letter-spacing:.13px">23 Jul 20:00</div>
<div class="t" style="left:390px;top:794px;letter-spacing:.13px">24 Jul 12:00</div>
<div class="t" style="left:454px;top:794px;letter-spacing:.13px">25 Jul 04:00</div>
<div class="t" style="left:518px;top:794px;letter-spacing:.13px">25 Jul 20:00</div>
<div class="t" style="left:582px;top:794px;letter-spacing:.13px">28 Jul 12:00</div>
<div class="t" style="left:646px;top:794px;letter-spacing:.13px">29 Jul 04:00</div>
<div class="t" style="left:710px;top:794px;letter-spacing:.13px">29 Jul 20:00</div>
<div class="t" style="left:774px;top:794px;letter-spacing:.13px">30 Jul 12:00</div>
<div class="t" style="left:838px;top:794px;letter-spacing:.13px">31 Jul 04:00</div>
<div class="t" style="left:902px;top:794px;letter-spacing:.13px">31 Jul 20:00</div>
<div class="t" style="left:966px;top:794px;letter-spacing:.13px">1 Aug 12:00</div>
<div class="t" style="left:1030px;top:794px;letter-spacing:.13px">4 Aug 04:00</div>
<!-- dialog -->
<div id="dlg">
 <div class="title"></div>
 <div class="d" style="left:8px;top:7px;font-size:12px;line-height:16px;letter-spacing:0">Custom Indicator - stoneaxe-x4x</div>
 <div class="d" style="left:531px;top:6px;font-size:13px;line-height:16px;transform:scaleX(.8);letter-spacing:0">?</div>
 <svg class="abs" style="left:575px;top:9px" width="11" height="11" viewBox="0 0 11 11"><path d="M0.3 0.3 L10 10 M10 0.3 L0.3 10" stroke="#000" stroke-width="1" fill="none"/></svg>
 <!-- tab page -->
 <div class="abs" style="left:6px;top:57px;width:591px;height:337px;box-sizing:border-box;border:1px solid #d9d9d9;background:#fff"></div>
 <div class="tab" style="left:8px;width:42px;padding-right:2px">About</div>
 <div class="tab" style="left:49px;width:53px">Common</div>
 <div class="tab" style="left:146px;width:41px;padding-right:3px">Colors</div>
 <div class="tab" style="left:186px;width:44px">Levels</div>
 <div class="tab" style="left:229px;width:69px;padding-left:3px">Visualization</div>
 <div class="tab" style="left:101px;top:37px;width:46px;height:21px;background:#fff;line-height:18px;letter-spacing:-0.1px;padding-right:1px">Inputs</div>
 <!-- list -->
 <div class="abs" style="left:18px;top:67px;width:457px;height:317px;box-sizing:border-box;border:1px solid #828790;background:#fff"></div>
 <div class="abs" style="left:245px;top:69px;width:1px;height:84px;background:#e5e5e5"></div>
 <div class="abs" style="left:472px;top:69px;width:1px;height:24px;background:#e5e5e5"></div>
 <div class="abs" style="left:19px;top:113px;width:454px;height:20px;background:#ebebeb"></div>
 <div class="abs" style="left:19px;top:112px;width:454px;height:1px;background:#c8c8c8"></div>
 <div class="abs" style="left:19px;top:132px;width:454px;height:1px;background:#c8c8c8"></div>
 <div class="abs" style="left:19px;top:152px;width:454px;height:1px;background:#c8c8c8"></div>
 <div class="abs" style="left:245px;top:93px;width:1px;height:60px;background:#dcdcdc"></div>
 <div class="d" style="left:26px;top:75px">Variable</div>
 <div class="d" style="left:252px;top:75px">Value</div>
 <div class="d" style="left:41px;top:97px">N1</div>
 <div class="d" style="left:41px;top:117px">N2</div>
 <div class="d" style="left:41px;top:137px">N3</div>
 <div class="d" style="left:249px;top:97px">8</div>
 <div class="d" style="left:249px;top:117px">24</div>
 <div class="d" style="left:249px;top:137px">89</div>
 <svg class="abs" style="left:21px;top:95px" width="17" height="17" viewBox="0 0 17 17">
<defs><linearGradient id="g0" x1="0" y1="0" x2="1" y2="1"><stop offset="0" stop-color="#cbe1f7"/><stop offset="1" stop-color="#7fb0e4"/></linearGradient></defs>
<path d="M0.5 1.5 Q0.5 0.5 1.5 0.5 H12 L15.5 4 V14.6 L13.5 15.9 L10.6 12.5 L9.4 13.8 L7.9 13.1 L6.4 14 L5 13.3 L3.3 14.9 L0.5 14.9 Z" fill="url(#g0)" stroke="#5b90cb" stroke-width="1" stroke-linejoin="round"/>
<path d="M12 0.8 V4 H15.2 Z" fill="#deecfa" stroke="#6a9bd2" stroke-width="0.7"/>
<text x="1.7" y="11" font-family="Liberation Sans, sans-serif" font-size="7" font-weight="bold" fill="#0d2342" textLength="10.6" lengthAdjust="spacingAndGlyphs">123</text>
</svg>
<svg class="abs" style="left:21px;top:115px" width="17" height="17" viewBox="0 0 17 17">
<defs><linearGradient id="g1" x1="0" y1="0" x2="1" y2="1"><stop offset="0" stop-color="#cbe1f7"/><stop offset="1" stop-color="#7fb0e4"/></linearGradient></defs>
<path d="M0.5 1.5 Q0.5 0.5 1.5 0.5 H12 L15.5 4 V14.6 L13.5 15.9 L10.6 12.5 L9.4 13.8 L7.9 13.1 L6.4 14 L5 13.3 L3.3 14.9 L0.5 14.9 Z" fill="url(#g1)" stroke="#5b90cb" stroke-width="1" stroke-linejoin="round"/>
<path d="M12 0.8 V4 H15.2 Z" fill="#deecfa" stroke="#6a9bd2" stroke-width="0.7"/>
<text x="1.7" y="11" font-family="Liberation Sans, sans-serif" font-size="7" font-weight="bold" fill="#0d2342" textLength="10.6" lengthAdjust="spacingAndGlyphs">123</text>
</svg>
<svg class="abs" style="left:21px;top:135px" width="17" height="17" viewBox="0 0 17 17">
<defs><linearGradient id="g2" x1="0" y1="0" x2="1" y2="1"><stop offset="0" stop-color="#cbe1f7"/><stop offset="1" stop-color="#7fb0e4"/></linearGradient></defs>
<path d="M0.5 1.5 Q0.5 0.5 1.5 0.5 H12 L15.5 4 V14.6 L13.5 15.9 L10.6 12.5 L9.4 13.8 L7.9 13.1 L6.4 14 L5 13.3 L3.3 14.9 L0.5 14.9 Z" fill="url(#g2)" stroke="#5b90cb" stroke-width="1" stroke-linejoin="round"/>
<path d="M12 0.8 V4 H15.2 Z" fill="#deecfa" stroke="#6a9bd2" stroke-width="0.7"/>
<text x="1.7" y="11" font-family="Liberation Sans, sans-serif" font-size="7" font-weight="bold" fill="#0d2342" textLength="10.6" lengthAdjust="spacingAndGlyphs">123</text>
</svg>
 <div class="btn" style="left:483px;top:328px;width:103px">Load</div>
 <div class="btn" style="left:483px;top:361px;width:103px">Save</div>
 <div class="btn" style="left:359px;top:399px;border:2px solid #0078d7;line-height:19px">OK</div>
 <div class="btn" style="left:440px;top:399px">Cancel</div>
 <div class="btn" style="left:521px;top:399px">Reset</div>
 <svg class="abs" style="left:591px;top:418px" width="11" height="11" viewBox="0 0 11 11" shape-rendering="crispEdges">
 <g fill="#bfbfbf"><rect x="7" y="1" width="2" height="2"/><rect x="4" y="4" width="2" height="2"/><rect x="7" y="4" width="2" height="2"/><rect x="2" y="7" width="1" height="2"/><rect x="4" y="7" width="2" height="2"/><rect x="7" y="7" width="2" height="2"/></g></svg>
</div>
</body></html>
